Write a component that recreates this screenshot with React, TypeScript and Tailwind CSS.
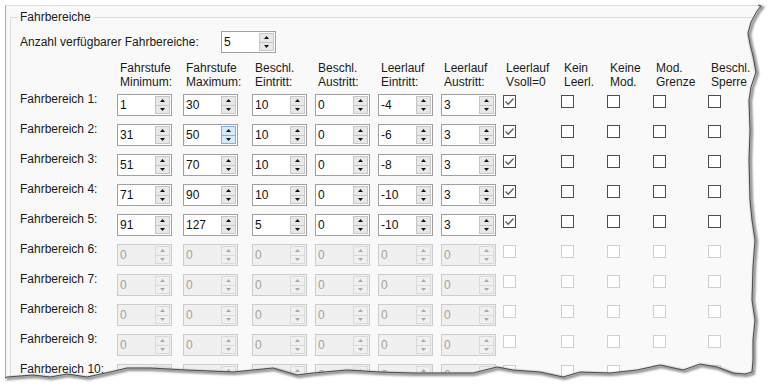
import React from "react";

type Row = { values: number[]; on: boolean };

const rows: Row[] = [
  { values: [1, 30, 10, 0, -4, 3], on: true },
  { values: [31, 50, 10, 0, -6, 3], on: true },
  { values: [51, 70, 10, 0, -8, 3], on: true },
  { values: [71, 90, 10, 0, -10, 3], on: true },
  { values: [91, 127, 5, 0, -10, 3], on: true },
  { values: [0, 0, 0, 0, 0, 0], on: false },
  { values: [0, 0, 0, 0, 0, 0], on: false },
  { values: [0, 0, 0, 0, 0, 0], on: false },
  { values: [0, 0, 0, 0, 0, 0], on: false },
  { values: [0, 0, 0, 0, 0, 0], on: false },
];

const headers = [
  ["Fahrstufe", "Minimum:"],
  ["Fahrstufe", "Maximum:"],
  ["Beschl.", "Eintritt:"],
  ["Beschl.", "Austritt:"],
  ["Leerlauf", "Eintritt:"],
  ["Leerlauf", "Austritt:"],
  ["Leerlauf", "Vsoll=0"],
  ["Kein", "Leerl."],
  ["Keine", "Mod."],
  ["Mod.", "Grenze"],
  ["Beschl.", "Sperre"],
];

function Arrow({ up, color }: { up?: boolean; color: string }) {
  return (
    <svg width="5" height="3" viewBox="0 0 5 3">
      <path d={up ? "M0 3 L2.5 0 L5 3 Z" : "M0 0 L2.5 3 L5 0 Z"} fill={color} />
    </svg>
  );
}

function Spin({ value, disabled, hover }: { value: number; disabled?: boolean; hover?: boolean }) {
  const box = disabled ? "border-[#cccccc] bg-[#f0f0f0] text-[#a8a29a]" : "border-[#a0a0a0] bg-white text-[#111]";
  const btn = disabled
    ? "border-[#dadada] bg-[#f0f0f0]"
    : hover
      ? "border-[#7ab3e6] bg-[#d6e9fa]"
      : "border-[#c6c6c6] bg-[#e8e8e8]";
  const arrow = disabled ? "#a8a8a8" : "#111";
  return (
    <div className={`mt-[2px] flex h-[22px] w-[55px] border ${box}`}>
      <div className="flex-1 pl-[2px] leading-[20px]">{value}</div>
      <div className="my-[1px] mr-[1px] flex w-[15px] flex-col">
        <div className={`flex flex-1 items-center justify-center border ${btn}`}>
          <Arrow up color={arrow} />
        </div>
        <div className={`-mt-px flex flex-1 items-center justify-center border ${btn}`}>
          <Arrow color={arrow} />
        </div>
      </div>
    </div>
  );
}

function Check({ checked, disabled }: { checked?: boolean; disabled?: boolean }) {
  return (
    <div
      className={`mt-[3px] flex h-[13px] w-[13px] items-center justify-center border bg-white ${
        disabled ? "border-[#cfcfcf]" : "border-[#4d4d4d]"
      }`}
    >
      {checked && (
        <svg width="11" height="11" viewBox="0 0 11 11">
          <path d="M1.5 5.5 L4.2 8.2 L9.5 2.5" fill="none" stroke="#5a5a5a" strokeWidth="1.3" />
        </svg>
      )}
    </div>
  );
}

const paper =
  "M0 0 H758 L761 6 L757 11 L751 22 L748 33 L750 44 L753 56 L756 72 L751 87 L749 100 L750 130 L749 160 L750 200 L752 220 L755 240 L753 267 L752 300 L755 320 L753 340 L753 360 L752 372 L745 374 L733 373 L717 367 L700 364 L683 370 L660 365 L637 370 L610 373 L580 372 L563 377 L540 372 L513 370 L497 367 L473 373 L447 373 L413 373 L380 372 L347 370 L313 373 L297 375 L273 368 L233 372 L187 370 L150 368 L127 368 L110 372 L87 377 L67 374 L50 377 L33 375 L7 377 L5 378 L0 378 Z";

const edge =
  "M758 5 L761 6 L757 11 L751 22 L748 33 L750 44 L753 56 L756 72 L751 87 L749 100 L750 130 L749 160 L750 200 L752 220 L755 240 L753 267 L752 300 L755 320 L753 340 L753 360 L752 372 L745 374 L733 373 L717 367 L700 364 L683 370 L660 365 L637 370 L610 373 L580 372 L563 377 L540 372 L513 370 L497 367 L473 373 L447 373 L413 373 L380 372 L347 370 L313 373 L297 375 L273 368 L233 372 L187 370 L150 368 L127 368 L110 372 L87 377 L67 374 L50 377 L33 375 L7 377 L5 378";

export default function App() {
  return (
    <div className="relative h-[388px] w-[768px] overflow-hidden bg-white font-['Liberation_Sans',Arial,sans-serif] text-[12px] text-[#1a1a1a]">
      <div className="ml-[5px] mt-[5px] h-[383px] border-l border-t border-l-[#a9a9a9] border-t-[#dcdcdc] bg-[#f9f9f9] pl-[4px] pt-[4px]">
        <fieldset className="w-[790px] border border-[#dcdcdc] pb-[40px] pl-[9px] pt-[7px]">
          <legend className="ml-[-3px] px-[3px] leading-[14px]">Fahrbereiche</legend>

          <div className="flex h-[22px] items-center">
            <div className="w-[201px] leading-[14px]">Anzahl verfügbarer Fahrbereiche:</div>
            <div className="-mt-[2px]">
              <Spin value={5} />
            </div>
          </div>

          <div className="mt-[8px] grid grid-cols-[97px_66px_69px_63px_63px_63px_62px_58px_46px_46px_55px_60px] grid-rows-[31px_repeat(10,30px)] items-start">
            <div />
            {headers.map((h, i) => (
              <div key={i} className="pl-[3px] leading-[14px]">
                <div>{h[0]}</div>
                <div>{h[1]}</div>
              </div>
            ))}

            {rows.map((r, ri) => (
              <React.Fragment key={ri}>
                <div className="leading-[14px]">Fahrbereich {ri + 1}:</div>
                {r.values.map((v, ci) => (
                  <Spin key={ci} value={v} disabled={!r.on} hover={ri === 1 && ci === 1} />
                ))}
                <Check checked={r.on} disabled={!r.on} />
                <Check disabled={!r.on} />
                <Check disabled={!r.on} />
                <Check disabled={!r.on} />
                <Check disabled={!r.on} />
              </React.Fragment>
            ))}
          </div>
        </fieldset>
      </div>

      {/* torn paper edge */}
      <svg className="pointer-events-none absolute inset-0" width="768" height="388" viewBox="0 0 768 388">
        <defs>
          <filter id="soft" x="-5%" y="-5%" width="110%" height="110%">
            <feGaussianBlur stdDeviation="1.2" />
          </filter>
        </defs>
        <path d={`M0 0 H768 V388 H0 Z ${paper}`} fill="#ffffff" fillRule="evenodd" />
        <path d={edge} fill="none" stroke="#8a8a8a" strokeWidth="3" filter="url(#soft)" transform="translate(1.5 1.5)" />
        <path d={edge} fill="none" stroke="#4a4a4a" strokeWidth="1" />
      </svg>
    </div>
  );
}
